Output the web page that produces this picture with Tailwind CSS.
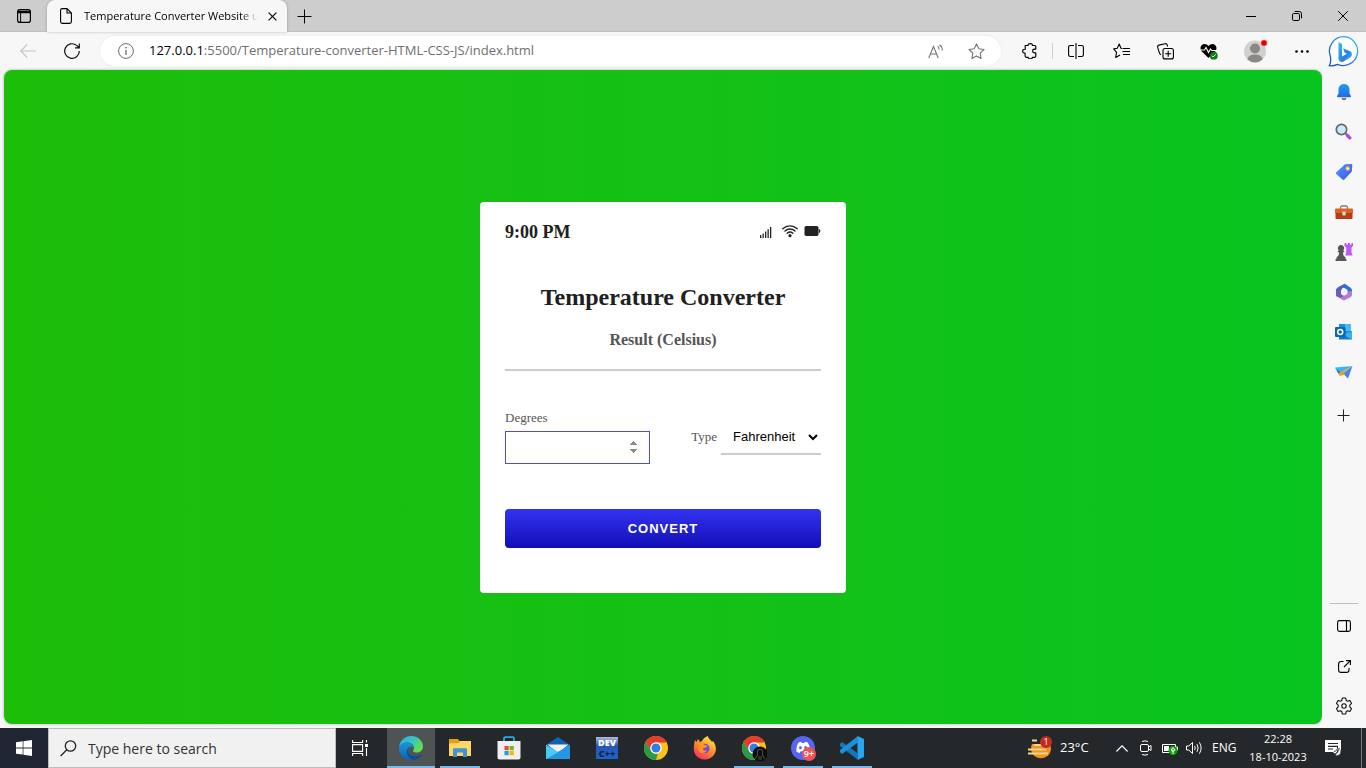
<!DOCTYPE html>
<html lang="en">
<head>
<meta charset="utf-8">
<meta name="viewport" content="width=device-width, initial-scale=1">
<title>Temperature Converter Website</title>
<script src="https://cdn.jsdelivr.net/npm/@tailwindcss/browser@4"></script>
</head>
<body class="flex h-screen flex-col overflow-hidden bg-[#f7f7f7] font-['Open_Sans',sans-serif] text-[#1a1a1a]">

<!-- Tab strip -->
<header class="flex h-8 shrink-0 items-stretch bg-[#cdcdcd] text-black shadow-[inset_0_-1px_0_#c0c0c0]">
  <button aria-label="Tab actions" class="grid w-[47px] place-items-center">
    <svg width="14" height="14" viewBox="0 0 14 14" fill="none" stroke="#000" stroke-width="1.2"><rect x=".6" y=".6" width="12.8" height="12.8" rx="2.2"/><path d="M1 2.5h12M1 3.5h12" stroke-width="1.6"/><path d="M3.6 4v9.4" stroke-width="1"/></svg>
  </button>
  <div class="flex w-60 items-center rounded-t-lg bg-[#f7f7f7] shadow-[0_0_3px_#0004]">
    <svg class="ml-3 shrink-0" width="14" height="16" viewBox="0 0 14 16" fill="none" stroke="#000" stroke-width="1.1"><path d="M8 .6H3.2C2.200.6 1.600 1.200 1.600 2.200v11.600c0 1 .6 1.600 1.600 1.600h7.600c1 0 1.600-.6 1.600-1.600V5zM8 .6V5h4.400"/></svg>
    <span class="ml-[11px] h-4 w-[174px] overflow-hidden bg-linear-to-r from-black from-90% to-transparent bg-clip-text text-[11px] leading-4 whitespace-nowrap text-transparent">Temperature Converter Website u</span>
    <button aria-label="Close tab" class="grid w-7 place-items-center">
      <svg width="9" height="9" viewBox="0 0 9 9" stroke="#111" stroke-width="1.3"><path d="M.6.6l7.8 7.8M8.4.6L.6 8.4"/></svg>
    </button>
  </div>
  <button aria-label="New tab" class="grid w-[35px] place-items-center">
    <svg width="15" height="15" viewBox="0 0 15 15" stroke="#000"><path d="M7.5.5v14M.5 7.5h14"/></svg>
  </button>
  <div class="ml-auto flex">
    <button aria-label="Minimize" class="grid w-[46px] place-items-center"><svg width="10" height="10" viewBox="0 0 10 10" stroke="#000"><path d="M0 5.5h10"/></svg></button>
    <button aria-label="Restore" class="grid w-[46px] place-items-center"><svg width="10" height="10" viewBox="0 0 10 10" fill="none" stroke="#000"><rect x=".5" y="2.5" width="7" height="7" rx="1.3"/><path d="M2.6.5h4.6a2.3 2.3 0 0 1 2.3 2.3v4.6"/></svg></button>
    <button aria-label="Close" class="grid w-[46px] place-items-center"><svg width="10" height="10" viewBox="0 0 10 10" stroke="#000"><path d="M.2.2l9.6 9.6M9.8.2L.2 9.8"/></svg></button>
  </div>
</header>

<div class="flex min-h-0 grow">
  <div class="flex min-w-0 grow flex-col">

    <!-- Toolbar -->
    <nav class="flex h-[38px] shrink-0 items-center pl-1.5">
      <button aria-label="Back" class="grid w-11 place-items-center"><svg width="16" height="14" viewBox="0 0 16 14" fill="none" stroke="#c6c6c6" stroke-width="1.1"><path d="M7 .5L.7 7 7 13.500M.7 7H16"/></svg></button>
      <button aria-label="Refresh" class="grid w-11 place-items-center"><svg width="16" height="16" viewBox="0 0 16 16" fill="none" stroke="#111" stroke-width="1.2"><path d="M15.300 8A7.300 7.300 0 1 1 12.600 2.400L15 4.500M15.300.6v4.300H11"/></svg></button>
      <div class="ml-1.5 flex h-[30px] grow items-center rounded-full bg-white pl-[18px] shadow-[0_0_3px_#00000012]">
        <svg class="shrink-0" width="16" height="16" viewBox="0 0 16 16" fill="none" stroke="#6e6e6e"><circle cx="8" cy="8" r="7.400"/><path d="M8 7v5" stroke-width="1.300"/><circle cx="8" cy="4.600" r=".9" fill="#6e6e6e" stroke="none"/></svg>
        <p class="ml-[15px] grow text-[13px] whitespace-nowrap text-[#6f6f6f]"><span class="text-black">127.0.0.1</span>:5500/Temperature-converter-HTML-CSS-JS/index.html</p>
        <button aria-label="Read aloud" class="grid w-10 place-items-center"><svg width="16" height="15" viewBox="0 0 16 15" fill="none" stroke="#757575" stroke-width="1.100"><path d="M.8 14L5.500 2.500 10.200 14M2.500 10h6M9.800 2.200a4 4 0 0 1 1.200 3.300M11.500.7a6.500 6.500 0 0 1 2.700 5.800"/></svg></button>
        <button aria-label="Add to favorites" class="mr-[5px] grid w-10 place-items-center"><svg width="17" height="17" viewBox="0 0 17 17" fill="none" stroke="#757575" stroke-width="1.100" stroke-linejoin="round"><path d="M8.500 1l2.300 4.800 5.200.7-3.800 3.700.9 5.300-4.600-2.500-4.600 2.500.9-5.300L1 6.500l5.200-.7z"/></svg></button>
      </div>
      <button aria-label="Extensions" class="ml-[7px] grid w-11 place-items-center"><svg width="16" height="16" viewBox="0 0 16 16" fill="none" stroke="#000" stroke-width="1.150" stroke-linejoin="round"><path d="M3.200 2.500h2.900C6 .9 7 .6 8.300.6s2.300.6 2.100 1.900h2.300c.7 0 1.100.4 1.100 1.100v2.500h-1.400c-2.400 0-2.400 3.800 0 3.800h1.400v3.200c0 .8-.4 1.200-1.100 1.200h-2.300c.1 1.100-.8 1.600-2.100 1.600s-2.200-.5-2.100-1.600H4.300c-.8 0-1.200-.4-1.200-1.200V10C1.500 10.200.6 9.300.6 8.200s.9-2 2.600-1.900z"/></svg></button>
      <span class="h-4 w-px bg-[#cfcfcf]"></span>
      <button aria-label="Split screen" class="grid w-[46px] place-items-center"><svg width="16" height="16" viewBox="0 0 16 16" fill="none" stroke="#000" stroke-width="1.100"><path d="M6 2.500H2.300C1.200 2.500.6 3.100.6 4.200v7.600c0 1.100.6 1.700 1.700 1.700H6M10 2.500h3.700c1.100 0 1.700.6 1.700 1.700v7.600c0 1.100-.6 1.700-1.700 1.700H10M8 0v16"/></svg></button>
      <button aria-label="Favorites" class="grid w-11 place-items-center"><svg width="17" height="16" viewBox="0 0 17 16" fill="none" stroke="#000" stroke-width="1.100" stroke-linejoin="round"><path d="M9.500 5.500L8 5.300 6.200 1 4.300 5.300.7 5.900l2.800 3.400-.8 5.200L7 12.100M10 5.500h7M9.500 8.500H17M10 11.500h7"/></svg></button>
      <button aria-label="Collections" class="grid w-11 place-items-center"><svg width="17" height="17" viewBox="0 0 17 17" fill="none" stroke="#000" stroke-width="1.100"><rect x="6" y="5.500" width="10.400" height="10.400" rx="2"/><path d="M11.200 7.700v6M8.200 10.700h6M4 11.600c-.8-.1-1.300-.6-1.500-1.400L.7 4.300C.4 3.200.9 2.400 1.900 2.100L8 .7c1.100-.2 1.900.2 2.200 1.200l.4 1.600"/></svg></button>
      <button aria-label="Browser essentials" class="grid w-11 place-items-center"><svg width="18" height="17" viewBox="0 0 18 17"><path d="M8.500 15L1.600 8.200C-1 4.500 1.500 1 4.500 1c1.700 0 3 .8 4 2 1-1.200 2.300-2 4-2 3 0 5.500 3.500 2.900 7.200z" fill="#000"/><path d="M.5 7h4l1.500-2.500 2.500 5 2-3.500 1.200 1.500H17" fill="none" stroke="#f7f7f7" stroke-width="1.100"/><circle cx="13.800" cy="12.700" r="3.900" fill="#0f7b10"/><path d="M12 12.800l1.200 1.200 2.500-2.600" fill="none" stroke="#fff"/></svg></button>
      <button aria-label="Profile" class="grid w-12 place-items-center"><svg width="24" height="24" viewBox="0 0 24 24" overflow="visible"><circle cx="12" cy="12.500" r="11" fill="#d2d0ce"/><circle cx="12" cy="9.500" r="5" fill="#8a8886"/><path d="M4.500 20.500c.5-3.500 3-5 7.500-5s7 1.500 7.500 5a11 11 0 0 1-15 0z" fill="#8a8886"/><circle cx="21" cy="4" r="3.200" fill="#e80000" stroke="#f7f7f7" stroke-width=".5"/></svg></button>
      <button aria-label="Settings and more" class="grid w-[43px] place-items-center pl-[2px]"><svg width="14" height="3" viewBox="0 0 14 3"><circle cx="1.500" cy="1.500" r="1.300"/><circle cx="7" cy="1.500" r="1.300"/><circle cx="12.500" cy="1.500" r="1.300"/></svg></button>
    </nav>

    <!-- Page -->
    <main class="mb-1 ml-1 grid grow place-items-center rounded-lg bg-linear-to-r from-[#1dbe08] to-[#07c41f] font-['Liberation_Serif',serif] shadow-[0_0_3px_#0005]">
      <form class="w-[366px] rounded bg-white px-[25px] pt-5 pb-[45px] text-[#202020]">
        <div class="flex h-5 items-center justify-between">
          <span class="text-lg leading-5 font-bold">9:00 PM</span>
          <div class="flex items-center pb-0.5">
            <svg class="mt-[3px]" width="12" height="12" viewBox="0 0 12 12" fill="#222"><path d="M0 9h1.300v3H0zM2.500 7.500h1.300V12H2.500zM5 5.500h1.300V12H5zM7.500 3.200h1.300V12H7.500zM10 1h1.300v11H10z"/></svg>
            <svg class="ml-2.5" width="16" height="14" viewBox="0 0 16 14" fill="none" stroke="#222" stroke-width="1.400" stroke-linecap="round"><path d="M.8 4.800a10.400 10.400 0 0 1 14.400 0M3 7a7.300 7.300 0 0 1 10 0M5.200 9.300a4.200 4.200 0 0 1 5.600 0"/><circle cx="8" cy="11.700" r=".9" fill="#222"/></svg>
            <svg class="ml-1.5" width="17" height="12" viewBox="0 0 17 12" fill="#222"><rect x=".5" y="1" width="14" height="10" rx="1.800"/><path d="M14.800 4c1 .2 1.500.9 1.500 2s-.5 1.800-1.500 2z"/></svg>
          </div>
        </div>
        <h1 class="mt-[39px] text-center text-2xl leading-8 font-bold">Temperature Converter</h1>
        <div class="mt-[17px] border-b-2 border-[#ccc] pb-[19px] text-center text-base leading-5 font-bold text-[#555]">Result (Celsius)</div>
        <div class="mt-[37px] flex items-start justify-between text-[13px] text-[#555]">
          <div class="flex flex-col">
            <label for="deg" class="leading-5">Degrees</label>
            <input id="deg" type="number" class="mt-[3px] h-[33px] w-[145px] border border-[#4b4bf0] px-2 font-['Liberation_Sans',sans-serif] outline-none [&::-webkit-inner-spin-button]:h-[14px] [&::-webkit-inner-spin-button]:opacity-100">
          </div>
          <div class="mt-3 flex items-center">
            <label for="type" class="mr-1">Type</label>
            <select id="type" class="h-[35px] w-[100px] border-b-2 border-[#ccc] bg-white pl-2 font-['Liberation_Sans',sans-serif] text-[13px] text-black"><option>Fahrenheit</option><option>Kelvin</option></select>
          </div>
        </div>
        <button type="button" class="mt-[45px] block h-[39px] w-full rounded bg-linear-to-b from-[#3432f2] to-[#110cb6] pt-px font-['Liberation_Sans',sans-serif] text-[13px] font-bold tracking-[1px] text-white">CONVERT</button>
      </form>
    </main>
  </div>

  <!-- Edge sidebar -->
  <aside class="flex w-11 shrink-0 flex-col bg-[#f7f7f7]">
    <button aria-label="Bing chat" class="grid h-10 place-items-center"><svg width="32" height="32" viewBox="0 0 32 32"><defs><linearGradient id="bo" x1="0" y1="1" x2="1" y2="0"><stop offset="0" stop-color="#1b48c8"/><stop offset=".5" stop-color="#2b83ec"/><stop offset="1" stop-color="#21c8e8"/></linearGradient><linearGradient id="bb" x1="0" y1="0" x2="1" y2="1"><stop offset="0" stop-color="#2cc4f4"/><stop offset=".6" stop-color="#2a7de8"/><stop offset="1" stop-color="#33c6ee"/></linearGradient></defs><path d="M16 .7A14.400 14.400 0 1 1 9.500 28.300Q5 30.300 1.300 29.700Q3.500 25.500 2.300 20A14.400 14.400 0 0 1 16 .7z" fill="#fff" stroke="url(#bo)" stroke-width="1.300"/><path d="M10.500 6l3.500 2v12.600l5-2.800-2.400-1.100-1.500-4.400 7.400 3.200c1.800 1.400 2 4.200.2 5.700l-7.600 4.600c-2 .8-4.600-.8-4.600-3.500z" fill="url(#bb)"/></svg></button>
    <button aria-label="Notifications" class="grid h-10 place-items-center"><svg width="16" height="18" viewBox="0 0 16 18"><defs><linearGradient id="be" x2="0" y2="1"><stop stop-color="#19a5e4"/><stop offset="1" stop-color="#2a66ea"/></linearGradient></defs><path d="M8 1c3.300 0 5.500 2.400 5.500 5.500v3.700l1.500 3c.1.800-.2 1-1 1H2c-.8 0-1.100-.2-1-1l1.500-3V6.500C2.500 3.400 4.700 1 8 1z" fill="url(#be)"/><path d="M5.500 15h5a2.500 2.300 0 0 1-5 0z" fill="#76777c"/></svg></button>
    <button aria-label="Search" class="grid h-10 place-items-center"><svg width="18" height="18" viewBox="0 0 18 18"><path d="M10.500 10.500l1.500 1.500" stroke="#77787c" stroke-width="2"/><path d="M11.500 11.500l4.300 4.300" stroke="#b446f0" stroke-width="3.200"/><circle cx="6.500" cy="6.500" r="5.200" fill="#cfe9fb" stroke="#66676b" stroke-width="1.700"/></svg></button>
    <button aria-label="Shopping" class="grid h-10 place-items-center"><svg width="18" height="18" viewBox="0 0 18 18"><defs><linearGradient id="tg" x2="1" y2="1"><stop stop-color="#49a0fa"/><stop offset="1" stop-color="#454cf0"/></linearGradient></defs><path d="M10 1.200L16 1c.9 0 1.300.5 1.300 1.400l-.5 6-7.400 8.200c-.6.6-1.300.6-1.900 0L1.300 11c-.6-.6-.5-1.300.1-1.800z" fill="url(#tg)"/><circle cx="12.700" cy="5.500" r="1.600" fill="#fff" stroke="#f5c331" stroke-width="1.200"/></svg></button>
    <button aria-label="Tools" class="grid h-10 place-items-center"><svg width="18" height="16" viewBox="0 0 18 16"><path d="M5.500 5V3.500c0-1 .6-1.500 1.500-1.500h4c.9 0 1.500.5 1.500 1.500V5" fill="none" stroke="#808085" stroke-width="1.300"/><rect y="4.500" width="18" height="5" rx="1" fill="#e2601f"/><path d="M.5 9h17v5c0 .6-.4 1-1 1h-15c-.6 0-1-.4-1-1z" fill="#b63c12"/><rect x="7.300" y="7.500" width="3.400" height="4" rx=".7" fill="#c8d8e3"/></svg></button>
    <button aria-label="Games" class="grid h-10 place-items-center"><svg width="20" height="20" viewBox="0 0 20 20"><path d="M10.500 1h1.800v1.500H14V1h2v1.500h1.600V1h1.400v3l-1.500 1.500v5l1.200 3h-7.500l1-3v-5L10.500 4z" fill="#bd5cf5"/><path d="M7 3a3.200 3.200 0 0 1 2.300 5.400l1 .8v1H9c0 2.800.6 4 2.500 5v1.500l1 .8V19h-11v-1.500l1-.8v-1.500c1.900-1 2.500-2.200 2.500-5H3.700v-1l1-.8A3.200 3.200 0 0 1 7 3z" fill="#565656"/></svg></button>
    <button aria-label="Microsoft 365" class="grid h-10 place-items-center"><svg width="18" height="18" viewBox="0 0 18 18"><path d="M9.500.8L3 4.200C1.700 5 1 6 1 7.500v4c0 1 .5 2 1.500 2.500l4-2.300V7c0-.8.3-1.300 1-1.700L12 3z" fill="#4b62b8"/><path d="M9.500.8l5.500 3.400c1.300.8 2 1.800 2 3.300v5l-4.500-2.200V8c0-.8-.3-1.300-1-1.700L8.500 4.600z" fill="#2874d8"/><path d="M17 8v3.500c0 1.300-.7 2.300-2 3L10 17c-.8.400-1.500.4-2.300 0L1.500 13c1.200.6 2.400.5 3.500-.1l7.500-4.400z" fill="#b27bd9"/><path d="M6.500 7v4.700l2.300 1.200L5 14.900 1 12.500V8z" fill="#7159bd"/><path d="M9 5.500l3.300 1.800v3.600L9 12.700l-3-1.800V7.300z" fill="#f7f7f7"/></svg></button>
    <button aria-label="Outlook" class="grid h-10 place-items-center"><svg width="18" height="18" viewBox="0 0 18 18"><path d="M4 1h12v13H4z" fill="#1b91dc"/><path d="M10 1h6v7h-6z" fill="#43bdf2"/><path d="M4 9l7 3 6-4v8.500H4z" fill="#1579c9"/><path d="M17 8v8.500L8 12z" fill="#38aeea"/><rect y="4" width="10.500" height="10" rx="1" fill="#0d63b5"/><circle cx="5.200" cy="9" r="2.500" fill="none" stroke="#fff" stroke-width="1.500"/></svg></button>
    <button aria-label="Drop" class="grid h-10 place-items-center"><svg width="18" height="16" viewBox="0 0 18 16"><path d="M0 3.500L17.500 2 6 8z" fill="#37b6ee"/><path d="M0 3.500L6 8l11-5.500L3.500 10z" fill="#1786d8"/><path d="M17.500 2L3.500 9.500l1 2.500z" fill="#f3a31c"/><path d="M17.500 2L13 14.500 8 9.500z" fill="#3f86ee"/><path d="M4.500 12l4-3.500 2 2z" fill="#e99312"/></svg></button>
    <button aria-label="Customize" class="grid h-[46px] place-items-center"><svg width="14" height="13" viewBox="0 0 14 13" stroke="#222"><path d="M6.500.5v12M.5 6.500h12"/></svg></button>
    <div class="mx-2 mt-auto border-t border-[#bdbdbd] pb-0.5"></div>
    <button aria-label="Toggle sidebar" class="grid h-10 place-items-center"><svg width="14" height="12" viewBox="0 0 14 12" fill="none" stroke="#000" stroke-width="1.100"><rect x=".6" y=".6" width="12.800" height="10.800" rx="1.800"/><path d="M9.500.6v10.800"/></svg></button>
    <button aria-label="Open link" class="grid h-10 place-items-center"><svg width="13" height="13" viewBox="0 0 13 13" fill="none" stroke="#000" stroke-width="1.100"><path d="M5.500 1.500H3C1.500 1.500.6 2.400.6 3.900V10c0 1.500.9 2.400 2.400 2.400h5.600c1.500 0 2.400-.9 2.400-2.400V8M8 .6h4.400V5M12.400.6L6 7"/></svg></button>
    <button aria-label="Settings" class="mb-0.5 grid h-10 place-items-center"><svg width="18" height="18" viewBox="0 0 18 18" fill="none" stroke="#111" stroke-width="1.100" stroke-linejoin="round"><path d="M7.300 1h3.400l.5 2.400 1.400.8 2.300-.8 1.700 3-1.800 1.700v1.800l1.800 1.700-1.700 3-2.300-.8-1.400.8-.5 2.400H7.300l-.5-2.400-1.400-.8-2.300.8-1.700-3 1.800-1.700V8.100L1.400 6.400l1.700-3 2.300.8 1.400-.8z"/><circle cx="9" cy="9" r="2.200"/></svg></button>
  </aside>
</div>

<!-- Taskbar -->
<footer class="flex h-10 shrink-0 items-stretch bg-[#25282a] text-white">
  <button aria-label="Start" class="grid w-12 shrink-0 place-items-center bg-[#202632]"><svg width="16" height="16" viewBox="0 0 16 16" fill="#fff"><path d="M0 2.300L6.700 1.300v6.200H0zM7.400 1.200L16 0v7.500H7.400zM0 8.400h6.700v6.200L0 13.700zM7.400 8.400H16V16l-8.600-1.200z"/></svg></button>
  <label class="flex w-72 shrink-0 items-center border border-[#bdbdbd] bg-[#f1f1f1] pl-[11px]">
    <svg width="17" height="17" viewBox="0 0 17 17" fill="none" stroke="#222" stroke-width="1.300"><circle cx="10.500" cy="6" r="5.200"/><path d="M6.800 9.700L.6 16"/></svg>
    <input type="search" aria-label="Search" placeholder="Type here to search" class="ml-[11px] w-0 grow bg-transparent pt-0.5 text-sm outline-none placeholder:text-[#333]">
  </label>
  <button aria-label="Task view" class="mr-[3px] grid w-12 shrink-0 place-items-center"><svg width="16" height="16" viewBox="0 0 16 16" fill="none" stroke="#fff" stroke-width="1.100"><path d="M.6 0v2.500h10V0M.6 16v-2.500h10V16M.6 4.600h10v6.800H.6zM14.500 0v2.500M14.500 8v8"/><path d="M13 4h3v3h-3z" fill="#fff" stroke="none"/></svg></button>
  <div class="flex gap-px">
    <button aria-label="Microsoft Edge" class="grid w-12 place-items-center border-b-2 border-[#76b9ed] bg-[#505353] pt-0.5"><svg width="24" height="24" viewBox="0 0 24 24"><defs><linearGradient id="e1" x2="1" y2=".4"><stop stop-color="#2dabec"/><stop offset=".6" stop-color="#36c6c0"/><stop offset="1" stop-color="#66dc50"/></linearGradient><linearGradient id="e2" x2="0" y2="1"><stop stop-color="#1795dd"/><stop offset="1" stop-color="#0f62b8"/></linearGradient></defs><path d="M0 11.500C.8 4.500 5.800 0 12 0c7 0 12 5 12 10.500 0 3.700-2.800 6-6 6-2.500 0-4-.8-4-1.800 0-.6 1-1.200 1-3C15 9 12 6.500 8.500 6.500 5 6.500 1.500 8 0 11.500z" fill="url(#e1)"/><path d="M0 12.500c0-3.500 4-6.500 8-6 3.800.4 6.500 2.800 6.500 5-3.300-2-6.500 0-6.500 4 0 4 3 7 6.500 8.200C6.500 25 0 19.500 0 12.500z" fill="url(#e2)"/><path d="M9.500 12.200c-1.800 4 1.500 8 6.500 8 2.500 0 4.500-.8 6-1.800.5-.2.700.1.500.5-1.700 3-4.700 5-8 4.900C9 22.500 5.500 15.500 9.500 12.200z" fill="#0b4d96"/></svg></button>
    <button aria-label="File Explorer" class="mx-1 grid w-10 place-items-center border-b-2 border-[#76b9ed] pt-0.5"><svg width="22" height="20" viewBox="0 0 22 20"><path d="M0 1h9l1.500 2H22v5H0z" fill="#e5a10a"/><path d="M0 5.500L10 5l1-2h11v15H0z" fill="#ffd566"/><path d="M4 11.500c0-.8.500-1.300 1.300-1.300h11.400c.8 0 1.300.5 1.300 1.300V19h-4v-4.500H8V19H4z" fill="#3f94d8"/></svg></button>
    <button aria-label="Microsoft Store" class="grid w-12 place-items-center"><svg width="24" height="24" viewBox="0 0 24 24"><path d="M7 6V2.500C7 1.700 7.500 1.200 8.300 1.200h7.400c.8 0 1.300.5 1.300 1.300V6" fill="none" stroke="#29a9e7" stroke-width="1.800"/><path d="M.5 5h23v16.500c0 1.200-.8 2-2 2h-19c-1.200 0-2-.8-2-2z" fill="#efefef"/><path d="M7.500 10h4.200v4.200H7.500z" fill="#e4502b"/><path d="M12.600 10h4.200v4.200h-4.200z" fill="#78b71e"/><path d="M7.500 15h4.200v4.200H7.500z" fill="#1f9ce8"/><path d="M12.600 15h4.200v4.200h-4.200z" fill="#f8b50c"/></svg></button>
    <button aria-label="Mail" class="grid w-12 place-items-center"><svg width="24" height="24" viewBox="0 0 24 24"><path d="M0 9L12 1l12 8v6H0z" fill="#1262b4"/><path d="M1.500 8.500h21L12 17z" fill="#f1f1f1"/><path d="M0 9l12 7 12-7v14H0z" fill="#35bff2"/><path d="M0 23L24 9v14z" fill="#2497e2"/><path d="M0 9l12 7L0 23z" fill="#46ccf7"/></svg></button>
    <button aria-label="Dev-C++" class="grid w-12 place-items-center"><span class="flex h-[22px] w-[22px] flex-col items-center bg-linear-to-b from-[#aebbe0] via-[#2b55b2] via-40% to-[#1c63c8] text-[9px] leading-[11px] font-extrabold"><span>DEV</span><span class="text-[#08234f]">C++</span></span></button>
    <button aria-label="Google Chrome" class="grid w-12 place-items-center"><svg width="24" height="24" viewBox="0 0 24 24"><g id="chrome"><circle cx="12" cy="12" r="12" fill="#fbc116"/><path d="M1.600 6A12 12 0 0 1 22.400 6H12L6.800 15z" fill="#e33b2e"/><path d="M1.600 6l5.200 9c1.500 2.600 4.500 3.500 7 2.700L12 24A12 12 0 0 1 1.600 6z" fill="#269b48"/><path d="M12 6h10.400" stroke="#e33b2e"/><circle cx="12" cy="12" r="5.800" fill="#fff"/><circle cx="12" cy="12" r="4.500" fill="#2f7de9"/></g></svg></button>
    <button aria-label="Firefox" class="grid w-12 place-items-center"><svg width="24" height="24" viewBox="0 0 24 24"><defs><linearGradient id="ff" x1=".8" x2=".2" y2="1"><stop stop-color="#fff04a"/><stop offset=".45" stop-color="#ff9626"/><stop offset="1" stop-color="#f5276a"/></linearGradient></defs><path d="M2 4l1.500 2L5 3l2 3 2-1c1-2.500 4-4.500 6-5 0 3 3 3.500 4 6l1-1c3 4 4 9 1.500 13-2.500 4-6 5.500-10 5.500C5 23.500.5 18.500.8 12 .9 8.500 1.500 6 2 4z" fill="url(#ff)"/><circle cx="11.700" cy="12.500" r="4.800" fill="#7149df"/><path d="M4.500 7c4-1 6 0 7 2 2 0 3 1 3 1-1 2-4 1.500-4.500 3 0 2 3 2 4 1-1 4-8 4-9-1C4.500 11 5.500 9 4.500 7z" fill="#ff931e"/></svg></button>
    <button aria-label="Google Chrome profile" class="mx-1 grid w-10 place-items-center border-b-2 border-[#76b9ed] pt-0.5"><svg width="26" height="26" viewBox="-1 -1 26 26"><use href="#chrome"/><circle cx="18" cy="18" r="7.500" fill="#0c0c0c"/><path d="M13.500 23c.5-3 2-3 2-4.500v-3c0-3 5-3 5 0v3c0 1.500 1.500 1.500 2 4.500M17 20v4M19 20v4" fill="none" stroke="#454545" stroke-width="1.200"/></svg></button>
    <button aria-label="Discord" class="mx-1 grid w-10 place-items-center border-b-2 border-[#76b9ed] pt-0.5"><svg width="26" height="26" viewBox="0 0 26 26"><circle cx="13" cy="13" r="12" fill="#5865f2"/><path d="M8.500 7.500l2.500-.8.800 1.200h2.600l.8-1.200 2.500.8c2 3 2.500 5.800 2.300 9-1 .8-2.200 1.300-3.300 1.500l-1-1.800h-5l-1 1.800c-1.200-.2-2.300-.7-3.300-1.500-.2-3.200.3-6 2.100-9z" fill="#fff"/><ellipse cx="10.400" cy="12.700" rx="1.400" ry="1.600" fill="#5865f2"/><ellipse cx="15.700" cy="12.700" rx="1.400" ry="1.600" fill="#5865f2"/><circle cx="19" cy="19" r="7" fill="#ed5357"/><text x="19" y="22" text-anchor="middle" font-family="Open Sans" font-size="9" font-weight="600" fill="#fff">9+</text></svg></button>
    <button aria-label="Visual Studio Code" class="mx-1 grid w-10 place-items-center border-b-2 border-[#76b9ed] pt-0.5"><svg width="24" height="24" viewBox="0 0 24 24"><path d="M17.500 0L24 3v18l-6.500 3z" fill="#29a7ec"/><path d="M0 8l2-2 16 11.500V24L0 10z" fill="#0f78bf"/><path d="M0 16l2 2L18 6.500V0L0 14z" fill="#1a90db"/></svg></button>
  </div>
  <div class="ml-auto flex items-center">
    <svg width="24" height="24" viewBox="0 0 24 24" overflow="visible"><path d="M4 8h18a10 10 0 1 1-18 0z" fill="#f3921e"/><path d="M4 4.500h5M6 9h12M0 13.500h18M0 17.500h20" stroke="#f6d894" stroke-width="1.800"/><circle cx="18" cy="6" r="6" fill="#c42b1c"/><text x="18" y="9.300" text-anchor="middle" font-family="Open Sans" font-size="9" fill="#fff">1</text></svg>
    <span class="ml-2 w-14 text-[13px]">23°C</span>
    <svg width="12" height="7" viewBox="0 0 12 7" fill="none" stroke="#fff" stroke-width="1.200"><path d="M.4 6.500L6 .8l5.600 5.700"/></svg>
    <svg class="ml-3" width="12" height="16" viewBox="0 0 12 16" fill="none" stroke="#fff"><rect x=".5" y="4.500" width="8" height="7" rx="1.500"/><path d="M8.500 7l2.500-1.500v5L8.500 9M2 1.500Q5 .2 8 1.500M2 14.500q3 1.300 6 0"/></svg>
    <svg class="ml-2.5" width="16" height="14" viewBox="0 0 16 14"><path d="M.5 3.500h13v8H.5zM14 6h1.500v3H14z" fill="none" stroke="#fff"/><path d="M2 5h5v5H2z" fill="#fff"/><circle cx="11" cy="9.500" r="4.500" fill="#13a10e"/><path d="M11 13V8.500M11 6.500l-2 2.500 2 1.500 2-1.500z" fill="none" stroke="#fff"/></svg>
    <svg class="ml-2" width="17" height="14" viewBox="0 0 17 14" fill="none" stroke="#fff"><path d="M.5 5h2.300L6.500 1.500v11L2.800 9H.5zM8.700 5q1 2 0 4M11 3.200q2.200 3.800 0 7.600M13.400 1.400q3.400 5.600 0 11.200"/></svg>
    <span class="ml-[9px] w-6 text-xs">ENG</span>
    <div class="ml-2 w-[68px] text-center text-[11px] leading-[18px] whitespace-nowrap"><div>22:28</div><div>18-10-2023</div></div>
    <button aria-label="Notifications" class="ml-1 grid w-[34px] place-items-center"><svg width="17" height="17" viewBox="0 0 17 17"><path d="M0 0h16v12h-4v4l-4-4H0z" fill="#fff"/><path d="M3 3.500h10M3 6.300h10M3 9h5" stroke="#25282a" stroke-width="1.200"/><path d="M9 11.500q4-1 3.500-5M13 9.500q0 4-4 5" fill="none" stroke="#25282a"/><path d="M14 8q3 3 1 6.500-3 2-5 0 4-1.500 4-6.500z" fill="#fff" stroke="#25282a" stroke-width=".6"/></svg></button>
    <span class="ml-[11px] h-10 w-[5px] border-l border-[#777]"></span>
  </div>
</footer>
</body>
</html>
